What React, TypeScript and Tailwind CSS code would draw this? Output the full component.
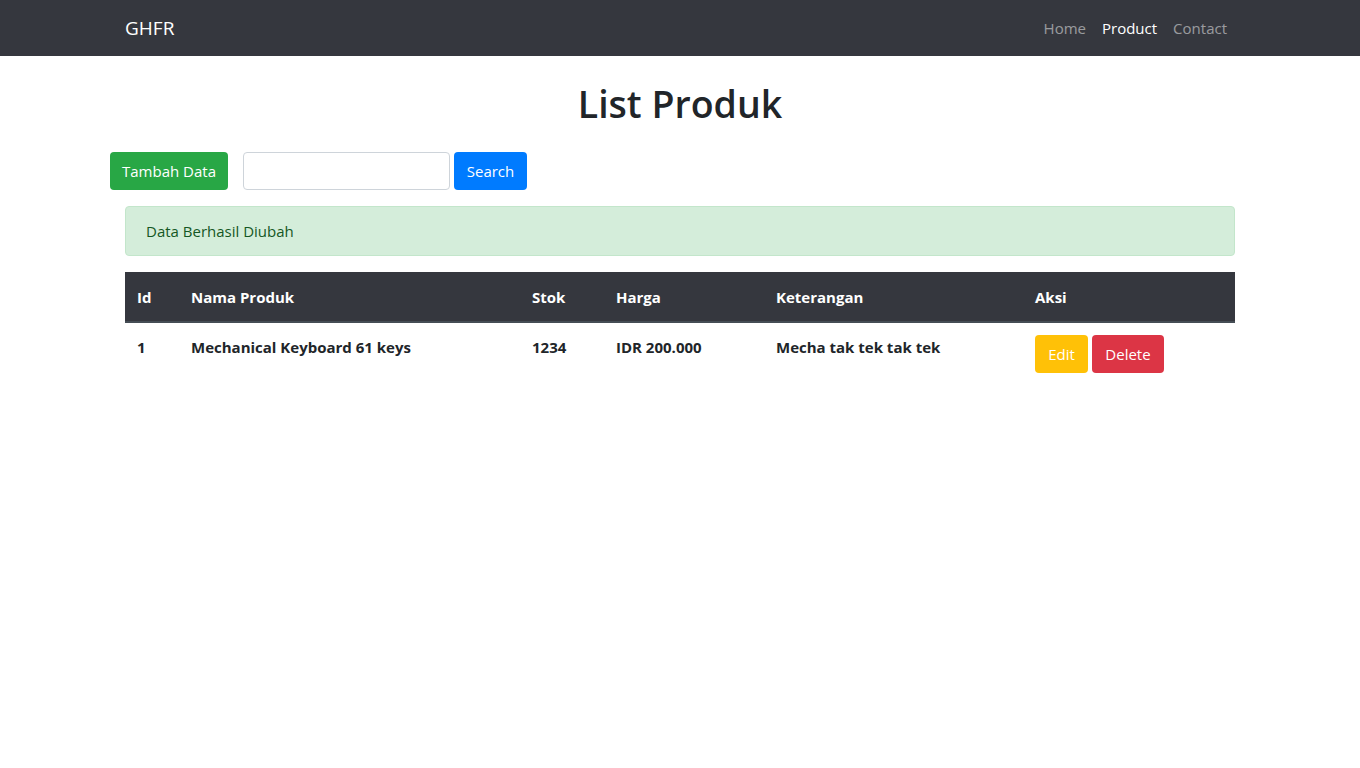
import React from "react";

export default function App() {
  const font = { fontFamily: '"Open Sans", "Noto Sans", sans-serif' };
  return (
    <div className="min-h-[768px] bg-white text-[#212529]" style={font}>
      <nav className="h-[56px] bg-[#35373e]">
        <div className="mx-auto flex h-full w-[1140px] items-center justify-between px-[15px]">
          <span className="text-[19px] leading-[30px] text-white">GHFR</span>
          <div className="flex text-[15px] leading-[24px]">
            <a className="px-[8px] text-[rgba(255,255,255,0.5)]">Home</a>
            <a className="px-[8px] text-white">Product</a>
            <a className="px-[8px] text-[rgba(255,255,255,0.5)]">Contact</a>
          </div>
        </div>
      </nav>
      <div className="mx-auto w-[1140px] px-[15px]">
        <h1 className="mt-[24px] mb-[24px] text-center text-[37.5px] font-semibold leading-[48px]">List Produk</h1>
        <div className="-mx-[15px] flex items-center">
          <button className="h-[38px] w-[118px] rounded-[4px] bg-[#28a745] text-center text-[15px] text-white">Tambah Data</button>
          <input className="ml-[15px] h-[38px] w-[207px] rounded-[4px] border border-[#ced4da] px-[12px]" />
          <button className="ml-[4px] h-[38px] w-[73px] rounded-[4px] bg-[#007bff] text-center text-[15px] text-white">Search</button>
        </div>
        <div className="mt-[16px] mb-[16px] flex h-[50px] items-center rounded-[4px] border border-[#c3e6cb] bg-[#d4edda] px-[20px] text-[15px] text-[#155724]">
          Data Berhasil Diubah
        </div>
        <table className="w-full table-fixed border-collapse text-[15px] leading-[24px]">
          <thead>
            <tr className="bg-[#35373e] text-left font-bold text-white">
              <th className="w-[54px] border-b-2 border-[#454d55] p-[12px] pt-[13px]">Id</th>
              <th className="w-[341px] border-b-2 border-[#454d55] p-[12px] pt-[13px]">Nama Produk</th>
              <th className="w-[84px] border-b-2 border-[#454d55] p-[12px] pt-[13px]">Stok</th>
              <th className="w-[160px] border-b-2 border-[#454d55] p-[12px] pt-[13px]">Harga</th>
              <th className="w-[259px] border-b-2 border-[#454d55] p-[12px] pt-[13px]">Keterangan</th>
              <th className="border-b-2 border-[#454d55] p-[12px] pt-[13px]">Aksi</th>
            </tr>
          </thead>
          <tbody>
            <tr className="align-top font-bold">
              <td className="p-[12px]">1</td>
              <td className="p-[12px]">Mechanical Keyboard 61 keys</td>
              <td className="p-[12px]">1234</td>
              <td className="p-[12px]">IDR 200.000</td>
              <td className="p-[12px]">Mecha tak tek tak tek</td>
              <td className="p-[12px]">
                <div className="flex gap-[4px]">
                  <button className="h-[38px] w-[53px] rounded-[4px] bg-[#ffc107] text-center font-normal text-white">Edit</button>
                  <button className="h-[38px] w-[72px] rounded-[4px] bg-[#dc3545] text-center font-normal text-white">Delete</button>
                </div>
              </td>
            </tr>
          </tbody>
        </table>
      </div>
    </div>
  );
}
